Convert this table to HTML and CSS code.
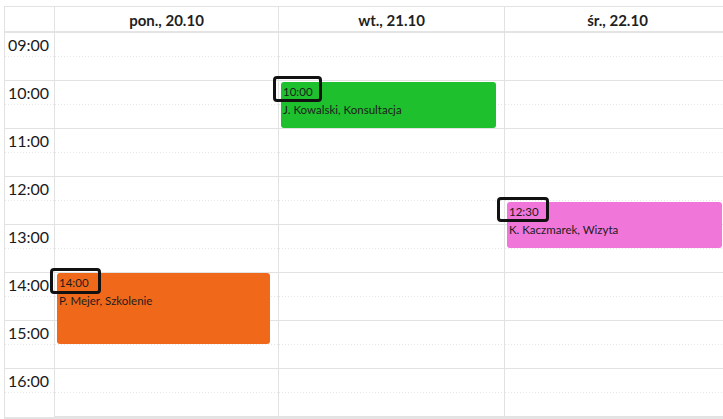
FILE: index.html
```html
<!DOCTYPE html>
<html lang="pl">
<head>
<meta charset="utf-8">
<link rel="stylesheet" href="styles.css">
</head>
<body>
<div class="cal">
  <div class="head">
    <div class="axis-head"></div>
    <div class="day-head">pon., 20.10</div>
    <div class="day-head">wt., 21.10</div>
    <div class="day-head">śr., 22.10</div>
  </div>
  <div class="body">
    <div class="axis">
      <div class="hour"><span>09:00</span></div>
      <div class="hour"><span>10:00</span></div>
      <div class="hour"><span>11:00</span></div>
      <div class="hour"><span>12:00</span></div>
      <div class="hour"><span>13:00</span></div>
      <div class="hour"><span>14:00</span></div>
      <div class="hour"><span>15:00</span></div>
      <div class="hour"><span>16:00</span></div>
    </div>
    <div class="day">
      <div class="hour"></div><div class="hour"></div><div class="hour"></div><div class="hour"></div>
      <div class="hour"></div><div class="hour"></div><div class="hour"></div><div class="hour"></div>
      <div class="event orange ev-1400">
        <div class="ev-time">14:00</div>
        <div class="ev-title">P. Mejer, Szkolenie</div>
        <div class="mark mark-orange"></div>
      </div>
    </div>
    <div class="day">
      <div class="hour"></div><div class="hour"></div><div class="hour"></div><div class="hour"></div>
      <div class="hour"></div><div class="hour"></div><div class="hour"></div><div class="hour"></div>
      <div class="event green ev-1000">
        <div class="ev-time">10:00</div>
        <div class="ev-title">J. Kowalski, Konsultacja</div>
        <div class="mark mark-green"></div>
      </div>
    </div>
    <div class="day">
      <div class="hour"></div><div class="hour"></div><div class="hour"></div><div class="hour"></div>
      <div class="hour"></div><div class="hour"></div><div class="hour"></div><div class="hour"></div>
      <div class="event pink ev-1230">
        <div class="ev-time">12:30</div>
        <div class="ev-title">K. Kaczmarek, Wizyta</div>
        <div class="mark mark-pink"></div>
      </div>
    </div>
  </div>
</div>
</body>
</html>
```

FILE: styles.css
```css
* { box-sizing: border-box; }
html, body { margin: 0; padding: 0; background: #fff; overflow: hidden; }
body {
  font-family: Lato, "Open Sans", sans-serif;
  color: #1d1d1d;
  width: 723px;
  height: 419px;
}
.cal {
  margin: 6px 0 0 4px;
  width: 727px;
  border-top: 1px solid #e2e2e2;
  border-left: 1px solid #e2e2e2;
}
.head {
  display: grid;
  grid-template-columns: 50px 224px 226px 226px;
  height: 26px;
  border-bottom: 2px solid #e4e4e4;
}
.axis-head, .day-head { border-right: 1px solid #e2e2e2; }
.day-head {
  font-weight: 700;
  font-size: 15px;
  text-align: center;
  line-height: 26px;
  color: #1f1f1f;
}
.body {
  display: grid;
  grid-template-columns: 50px 224px 226px 226px;
  border-bottom: 2px solid #e4e4e4;
}
.axis, .day {
  border-right: 1px solid #e2e2e2;
  display: flex;
  flex-direction: column;
}
.day { position: relative; }
.hour {
  height: 48px;
  border-bottom: 1px solid #e2e2e2;
  background-image: linear-gradient(to right, #e6e6e6 50%, transparent 50%);
  background-size: 3px 1px;
  background-repeat: repeat-x;
  background-position: 0 23px;
}
.hour:last-child { border-bottom: none; }
.axis .hour span {
  display: block;
  font-size: 16px;
  line-height: 19px;
  padding: 2px 0 0 3px;
  color: #1a1a1a;
}
.event {
  position: absolute;
  left: 2px;
  right: 8px;
  border-radius: 3px;
  padding: 1px 2px 0 2px;
  font-size: 11.5px;
  line-height: 18px;
  color: #1c1c1c;
}
.ev-1000 { top: 49px; height: 46px; }
.ev-1230 { top: 169px; height: 46px; }
.ev-1400 { top: 240px; height: 71px; }
.green { background: #1fc02e; }
.pink { background: #f076d9; }
.orange { background: #f0691b; }
.mark {
  position: absolute;
  border: 3px solid #111;
  border-radius: 4px;
  height: 26px;
}
.mark-green { left: -8px; top: -6px; width: 49px; }
.mark-pink { left: -10px; top: -5px; width: 52px; height: 25px; }
.mark-orange { left: -7px; top: -5px; width: 51px; }
```
